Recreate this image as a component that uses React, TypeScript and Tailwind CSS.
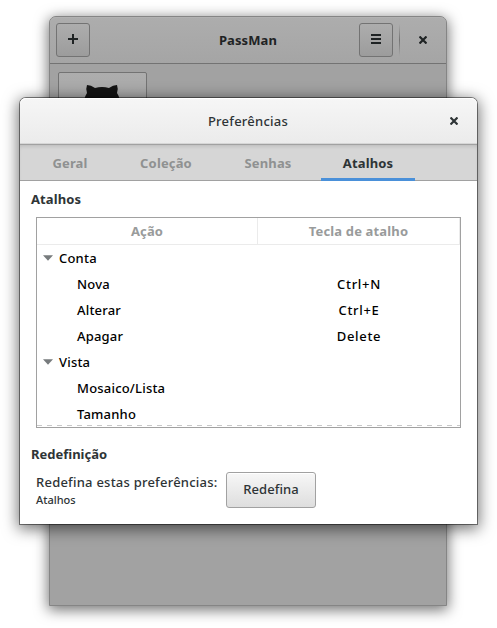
import React from 'react';

const rows = [
  { label: 'Conta', group: true, key: '' },
  { label: 'Nova', group: false, key: 'Ctrl+N' },
  { label: 'Alterar', group: false, key: 'Ctrl+E' },
  { label: 'Apagar', group: false, key: 'Delete' },
  { label: 'Vista', group: true, key: '' },
  { label: 'Mosaico/Lista', group: false, key: '' },
  { label: 'Tamanho', group: false, key: '' },
];

function Cross({ color }: { color: string }) {
  return (
    <svg width="8" height="8" viewBox="0 0 8 8" fill="none" stroke={color} strokeWidth="2.2">
      <path d="M.5.5 7.5 7.5M7.5.5.5 7.5" />
    </svg>
  );
}

function MainWindow() {
  return (
    <div className="absolute left-[49px] top-[16px] flex h-[590px] w-[398px] flex-col rounded-t-[7px] border border-[#858585] bg-[#a2a2a2] shadow-[0_3px_14px_1px_rgba(0,0,0,0.55)]">
      <header className="flex h-[47px] shrink-0 items-center rounded-t-[6px] border-b border-[#737373] bg-linear-to-b from-[#adadad] to-[#a5a5a5] pl-[6px] pr-[19px] shadow-[inset_0_1px_#b2b2b2]">
        <button className="mb-px flex h-[34px] w-[34px] items-center justify-center rounded-[3px] border border-[#737373] bg-linear-to-b from-[#adadad] to-[#9c9c9c]">
          <svg width="10" height="10" viewBox="0 0 10 10" fill="#1f2324" className="-translate-y-px">
            <path d="M4 0h2v4h4v2H6v4H4V6H0V4h4z" />
          </svg>
        </button>
        <h1 className="ml-[47px] flex-1 pt-[2px] text-center text-[13px] font-bold tracking-[0.1px] text-[#1f2324]">PassMan</h1>
        <button className="mb-px flex h-[34px] w-[34px] items-center justify-center rounded-[3px] border border-[#737373] bg-linear-to-b from-[#adadad] to-[#9c9c9c]">
          <svg width="10" height="10" viewBox="0 0 10 10" fill="#1f2324" className="-translate-y-px">
            <path d="M0 0h10v2H0zM0 4h10v2H0zM0 8h10v2H0z" />
          </svg>
        </button>
        <div className="ml-[6px] h-[32px] w-px bg-linear-to-b from-transparent via-[#737373] to-transparent" />
        <div className="ml-[19px]"><Cross color="#1f2324" /></div>
      </header>
      <div className="ml-[8px] mt-[8px] flex h-[80px] w-[89px] justify-center rounded-[2px] border border-[#737373] bg-linear-to-b from-[#adadad] to-[#9c9c9c] pt-[11px]">
        <svg width="36" height="36" viewBox="0 0 36 36" fill="#141414" className="-translate-x-px">
          <path d="M0 16Q1 12 3 9Q1.5 5 3 1Q7 1 11 4Q18 2 25 4Q29 1 33 1Q34.500 5 33 9Q35 12 36 16Q36 31 24 35H12Q0 31 0 16Z" />
        </svg>
      </div>
    </div>
  );
}

function Dialog() {
  return (
    <div className="absolute left-[19px] top-[97px] flex h-[428px] w-[459px] flex-col rounded-t-[7px] border border-black/45 bg-white bg-clip-padding font-medium text-[#2e3436] shadow-[0_3px_15px_1px_rgba(0,0,0,0.55)]">
      <header className="flex h-[47px] shrink-0 items-center rounded-t-[6px] border-b border-[#a1a1a1] bg-linear-to-b from-[#f6f6f6] to-[#ebebeb] pl-[26px] pr-[19px] shadow-[inset_0_1px_white,inset_0_-1px_#d6d6d6]">
        <h2 className="flex-1 pt-px text-center text-[13px] tracking-[0.25px]">Preferências</h2>
        <Cross color="#2e3436" />
      </header>
      <nav className="flex h-[36px] shrink-0 border-b border-[#a1a1a1] bg-[#d6d6d6] pl-[3px] text-[13px] font-bold leading-[37px] tracking-[0.15px] text-[#8f9191] shadow-[inset_0_3px_4px_-2px_rgba(0,0,0,0.14)]">
        <div className="w-[94px] text-center">Geral</div>
        <div className="w-[98px] text-center">Coleção</div>
        <div className="w-[106px] text-center">Senhas</div>
        <div className="-mb-px h-[36px] w-[94px] border-b-[3px] border-[#4a90d9] text-center text-[#2e3436]">Atalhos</div>
      </nav>
      <main className="flex flex-col">
        <h3 className="ml-[11px] mt-[8px] h-[20px] text-[13px] font-bold leading-[20px] tracking-[0.1px]">Atalhos</h3>
        <section className="ml-[16px] mt-[8px] h-[211px] w-[425px] border border-[#a1a1a1] text-[13px] text-black">
          <div className="flex h-[27px] border-b border-[#ebebeb] text-center font-bold leading-[27px] tracking-[0.15px] text-[#999b9b]">
            <div className="w-[221px] border-r border-[#ebebeb]">Ação</div>
            <div className="w-[202px] border-r border-[#ebebeb]">Tecla de atalho</div>
          </div>
          {rows.map((r) => (
            <div key={r.label} className="flex h-[26px] items-center leading-[26px] tracking-[0.2px]">
              <div className={r.group ? 'flex w-[221px] items-center pl-[6px]' : 'w-[221px] pl-[40px]'}>
                {r.group && (
                  <svg width="10" height="6" viewBox="0 0 10 6" className="mr-[6px]" fill="#777b7d">
                    <path d="M0 .3h10L5 5.700z" />
                  </svg>
                )}
                <span>{r.label}</span>
              </div>
              <div className="w-[202px] text-center tracking-[0.7px]">{r.key}</div>
            </div>
          ))}
          <div className="-mt-[2px] h-px bg-[repeating-linear-gradient(90deg,#c9c9c9_0_5px,transparent_5px_10px)]" />
        </section>
        <h3 className="ml-[11px] mt-[16px] h-[20px] text-[13px] font-bold leading-[20px]">Redefinição</h3>
        <div className="ml-[16px] mt-[8px] flex">
          <div className="w-[190px]">
            <p className="h-[20px] whitespace-nowrap text-[13px] leading-[20px] tracking-[0.23px]">Redefina estas preferências:</p>
            <p className="text-[11px] leading-[15px]">Atalhos</p>
          </div>
          <button className="h-[36px] w-[90px] rounded-[3px] border border-[#a1a1a1] bg-linear-to-b from-[#f7f7f7] to-[#dedede] text-[13px] tracking-[0.1px] shadow-[inset_0_1px_white]">Redefina</button>
        </div>
      </main>
    </div>
  );
}

export default function App() {
  return (
    <div className="relative h-[628px] w-[497px] overflow-hidden bg-white font-['Noto_Sans',sans-serif]">
      <MainWindow />
      <Dialog />
    </div>
  );
}
